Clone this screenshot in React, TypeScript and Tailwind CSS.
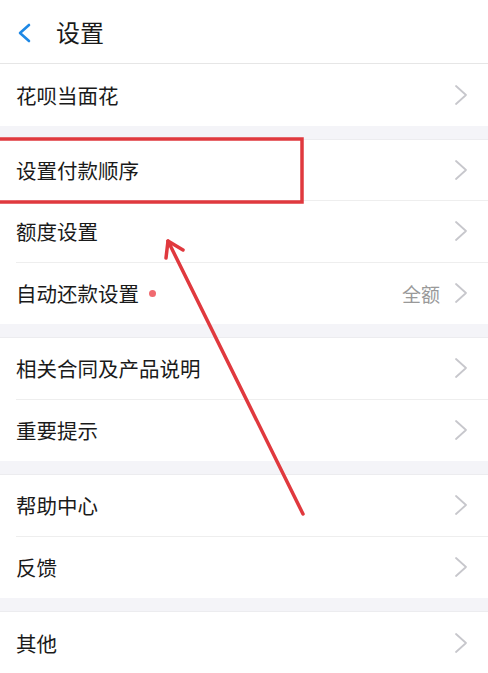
import { Fragment } from "react";

type Row = { label: string; value?: string; dot?: boolean };

const groups: Row[][] = [
  [{ label: "花呗当面花" }],
  [
    { label: "设置付款顺序" },
    { label: "额度设置" },
    { label: "自动还款设置", value: "全额", dot: true },
  ],
  [{ label: "相关合同及产品说明" }, { label: "重要提示" }],
  [{ label: "帮助中心" }, { label: "反馈" }],
  [{ label: "其他" }],
];

function Chevron() {
  return (
    <svg width="14" height="22" viewBox="0 0 14 22" fill="none" className="shrink-0">
      <path d="M2 2 L12 11 L2 20" stroke="#c7c7cc" strokeWidth="1.8" strokeLinecap="round" strokeLinejoin="round" />
    </svg>
  );
}

export default function App() {
  return (
    <div
      className="relative w-[488px] h-[673px] overflow-hidden bg-[#f4f4f8] text-[#1a1a1a]"
      style={{ fontFamily: '"Noto Sans CJK SC", "Noto Sans", sans-serif' }}
    >
      {/* header */}
      <div className="h-[64px] bg-white border-b border-[#e6e6e6] flex items-center">
        <div className="w-[56px] flex items-center pl-[16px] pt-[2px]">
          <svg width="18" height="20" viewBox="0 0 18 20" fill="none">
            <path d="M13 2 L4 10 L13 18" stroke="#1e88e5" strokeWidth="2.6" strokeLinecap="round" strokeLinejoin="round" />
          </svg>
        </div>
        <span className="text-[24px] leading-none">设置</span>
      </div>

      {groups.map((group, gi) => (
        <Fragment key={gi}>
          {gi > 0 && <div className="h-[14px] bg-[#f4f4f8] border-b border-[#ececef]" />}
          <div className="bg-white">
            {group.map((row, ri) => (
              <div key={row.label} className="pl-[16px]">
                <div
                  className={`h-[61.5px] flex items-center pr-[20px] ${
                    ri < group.length - 1 ? "border-b border-[#eeeeee]" : ""
                  }`}
                >
                  <span className="text-[20.5px] leading-none">{row.label}</span>
                  {row.dot && <span className="ml-[10px] w-[7px] h-[7px] rounded-full bg-[#f06a70]" />}
                  <span className="flex-1" />
                  {row.value && <span className="text-[19px] leading-none text-[#999999] mr-[14px]">{row.value}</span>}
                  <Chevron />
                </div>
              </div>
            ))}
          </div>
        </Fragment>
      ))}

      {/* annotation overlay */}
      <svg className="absolute inset-0 pointer-events-none" width="488" height="673" viewBox="0 0 488 673" fill="none">
        <rect x="-10" y="139" width="312" height="63" stroke="#e0393e" strokeWidth="3.5" />
        <path d="M303 514 L168 241" stroke="#e0393e" strokeWidth="3.5" strokeLinecap="round" />
        <path d="M183 250 L168 241 L166 258" stroke="#e0393e" strokeWidth="3.5" strokeLinecap="round" strokeLinejoin="round" />
      </svg>
    </div>
  );
}
